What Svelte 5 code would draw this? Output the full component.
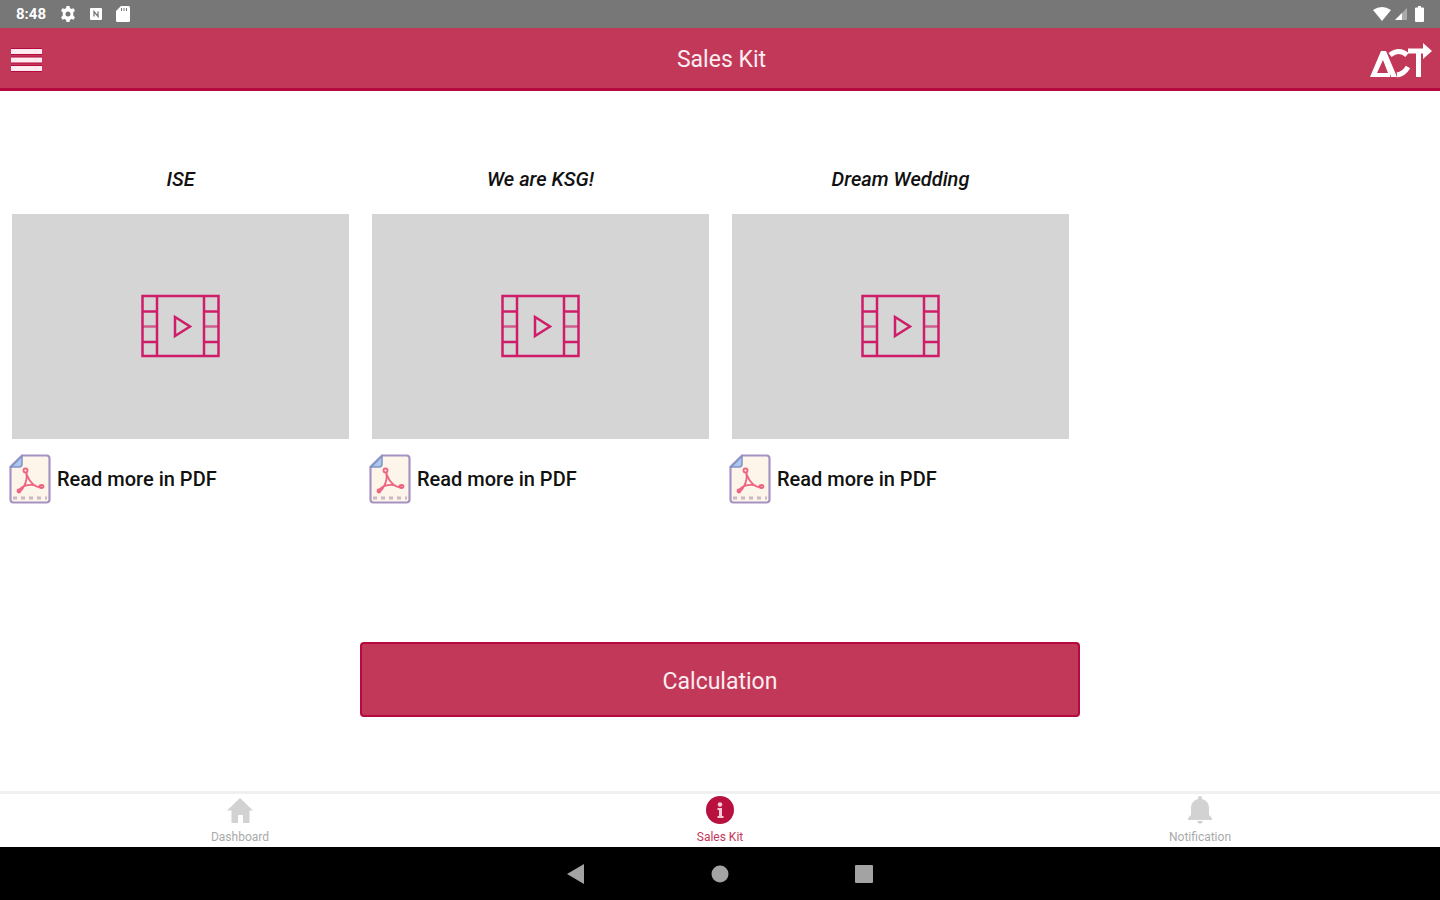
<script>
    const kits = [
        { title: 'ISE' },
        { title: 'We are KSG!' },
        { title: 'Dream Wedding' }
    ];

    let activeTab = 'Sales Kit';
    const tabs = ['Dashboard', 'Sales Kit', 'Notification'];
</script>

<div class="screen">
    <div class="status">
        <div class="status-group">
            <span class="clock">8:48</span>
            <svg width="16" height="16" viewBox="0 0 16 16">
                <path fill="#fff" fill-rule="evenodd" d="M6.5 0h3l.4 2.1 1.5.9 2.1-.8L15 4.8l-1.7 1.4v3.6L15 11.2l-1.500 2.600-2.100-.8-1.500.9L9.500 16h-3l-.4-2.100-1.500-.9-2.100.8L1 11.200l1.700-1.400V6.200L1 4.800l1.500-2.600 2.100.8 1.500-.9zM8 5.500a2.500 2.500 0 1 0 0 5 2.500 2.500 0 0 0 0-5z" />
            </svg>
            <svg width="12" height="14" viewBox="0 0 12 14">
                <rect y="1" width="12" height="12" rx="1" fill="#fff" />
                <path d="M4 9.500V4.500l4 5v-5" fill="none" stroke="#777" stroke-width="1.300" />
            </svg>
            <svg width="14" height="16" viewBox="0 0 14 16">
                <path fill="#fff" d="M5 0h7.500Q14 0 14 1.500v13q0 1.500-1.500 1.500h-11Q0 16 0 14.500V5z" />
                <path d="M5.500 2v3M8 2v3M10.500 2v3" stroke="#777" />
            </svg>
        </div>
        <div class="status-group signals">
            <svg width="18" height="14" viewBox="0 0 18 14"><path fill="#fff" d="M0 3Q9-3 18 3L9 14z" /></svg>
            <svg width="12" height="12" viewBox="0 0 12 12">
                <path fill="#aaa" d="M0 12L12 0v12z" />
                <path fill="#fff" d="M0 12L7 5v7z" />
            </svg>
            <svg width="9" height="16" viewBox="0 0 9 16"><path fill="#fff" d="M3 0h3v1.500h2q1 0 1 1V15q0 1-1 1H1q-1 0-1-1V2.500q0-1 1-1h2z" /></svg>
        </div>
    </div>

    <header>
        <button class="menu" aria-label="Menu">
            <svg width="31" height="24" viewBox="0 0 31 24">
                <path d="M0 3.500h31M0 12h31M0 20.500h31" stroke="#b5093f" stroke-width="7" />
                <path d="M0 3.500h31M0 12h31M0 20.500h31" stroke="#fde9ee" stroke-width="5" />
            </svg>
        </button>
        <h1>Sales Kit</h1>
        <svg class="logo" width="62" height="36" viewBox="0 0 62 36" role="img" aria-label="ACT">
            <path fill="#fff" fill-rule="evenodd" d="M0 35L11 9h5l11 26h-6l-1-3v3zM7 31h11l-5-13z" />
            <g fill="none" stroke="#fff">
                <path d="M20 13q9-7 17 0" stroke-width="5" />
                <path d="M27 33q7-1 11-8" stroke-width="5" />
                <path d="M38 9h17M48.500 9v26" stroke-width="5" />
            </g>
            <path fill="#fff" d="M53 1l9 8-9 8z" />
        </svg>
    </header>

    <main>
        <div class="kits">
            {#each kits as kit}
                <section class="kit">
                    <h2>{kit.title}</h2>
                    <button class="video" aria-label="Play {kit.title}">
                        <svg width="80" height="64" viewBox="0 0 80 64" fill="none" stroke="#cf1d69" stroke-width="2.500">
                            <path d="M1.500 2h76v60h-76zM16 2v60M63 2v60M1.500 17.500H16M1.500 48H16M63 17.500h14.500M63 48h14.500" />
                            <path d="M1.500 32.500H16M63 32.500h14.500" opacity=".65" />
                            <path d="M34 23v19l15-9.500z" />
                        </svg>
                    </button>
                    <a class="pdf" href="#pdf">
                        <svg width="42" height="50" viewBox="0 0 42 50">
                            <path d="M13 1.500h24.500q3 0 3 3v41q0 3-3 3h-33q-3 0-3-3V13z" fill="#fdf5ea" stroke="#a593c4" stroke-width="2.200" />
                            <path d="M2 13L13 2v8q0 3-3 3z" fill="#a9c9f0" stroke="#8192c4" stroke-width="1.500" />
                            <path d="M4 44h34" stroke="#cbb8c4" stroke-width="3" stroke-dasharray="4 4" />
                            <g fill="none" stroke="#ee6480" stroke-width="1.800">
                                <path d="M17 18q2 8 8 13 4 3 8 2M17 18q2 7-2 14-2 5-6 6M10 36q5-6 15-5" />
                                <circle cx="16.500" cy="16.500" r="2" />
                                <circle cx="10" cy="37" r="1.500" />
                                <ellipse cx="32.500" cy="32.500" rx="2" ry="1.500" />
                            </g>
                        </svg>
                        <span>Read more in PDF</span>
                    </a>
                </section>
            {/each}
        </div>

        <button class="calculation">Calculation</button>
    </main>

    <nav class="tabs">
        {#each tabs as tab}
            <button class:active={activeTab === tab} on:click={() => (activeTab = tab)}>
                <svg width="28" height="28" viewBox="0 0 28 28" fill="currentColor">
                    {#if tab === 'Dashboard'}
                        <path d="M14 2l13 12.500h-3.500V27H17v-8h-5v8H5.500V14.500H1z" />
                    {:else if tab === 'Sales Kit'}
                        <circle cx="14" cy="14" r="14" />
                        <path d="M11.500 12h4.500v8h1.500v2h-6v-2H13v-6h-1.500z" fill="#f7cbd8" />
                        <circle cx="14" cy="8.500" r="2.300" fill="#f7cbd8" />
                    {:else}
                        <path d="M14 0q2 0 2 3 7 2 7 9v7l3 3v2H2v-2l3-3v-7q0-7 7-9 0-3 2-3zM11 25h6q-1 3-3 3t-3-3z" />
                    {/if}
                </svg>
                <span>{tab}</span>
            </button>
        {/each}
    </nav>

    <div class="system">
        <button aria-label="Back"><svg width="20" height="20" viewBox="0 0 20 20"><path d="M1 10L18 0v20z" /></svg></button>
        <button aria-label="Home"><svg width="20" height="20" viewBox="0 0 20 20"><circle cx="10" cy="10" r="8.500" /></svg></button>
        <button aria-label="Overview"><svg width="20" height="20" viewBox="0 0 20 20"><rect x="1" y="1" width="18" height="18" rx="1" /></svg></button>
    </div>
</div>

<style>
    :global(body) {
        margin: 0;
        background: #fff;
    }
    .screen {
        display: flex;
        flex-direction: column;
        min-height: 100vh;
        font-family: Roboto, sans-serif;
        color: #111;
    }
    button {
        padding: 0;
        border: none;
        background: none;
        font-family: inherit;
        cursor: pointer;
    }
    svg {
        display: block;
    }
    .status {
        display: flex;
        justify-content: space-between;
        box-sizing: border-box;
        height: 28px;
        padding: 0 16px;
        background: #777;
    }
    .status-group {
        display: flex;
        align-items: center;
        gap: 14px;
    }
    .signals {
        gap: 4px;
    }
    .signals svg:last-child {
        margin-left: 4px;
    }
    .clock {
        color: #fff;
        font-size: 15px;
        font-weight: 700;
    }
    header {
        display: grid;
        grid-template-columns: 1fr auto 1fr;
        align-items: center;
        box-sizing: border-box;
        height: 63px;
        padding: 4px 8px 0 11px;
        border-bottom: 3px solid #b5093f;
        background: #c23858;
    }
    .menu {
        justify-self: start;
    }
    h1 {
        margin: 0;
        color: #fdecf0;
        font-size: 23px;
        font-weight: 400;
        line-height: 28px;
    }
    .logo {
        justify-self: end;
    }
    main {
        flex: 1;
        display: flex;
        flex-direction: column;
        justify-content: space-between;
        align-items: center;
        padding: 74px 0;
    }
    .kits {
        display: grid;
        grid-template-columns: repeat(4, 1fr);
        width: 100%;
    }
    .kit {
        padding: 0 11px 0 12px;
    }
    h2 {
        margin: 0 0 21px;
        font-size: 20px;
        font-style: italic;
        font-weight: 500;
        line-height: 28px;
        text-align: center;
    }
    .video {
        display: flex;
        align-items: center;
        justify-content: center;
        width: 100%;
        aspect-ratio: 3 / 2;
        background: #d5d5d5;
    }
    .pdf {
        display: flex;
        align-items: center;
        gap: 6px;
        margin: 15px 0 0 -3px;
        color: inherit;
        font-size: 20px;
        font-weight: 500;
        text-decoration: none;
    }
    .calculation {
        width: 50%;
        height: 75px;
        padding-top: 3px;
        border: 2px solid #b5093f;
        border-radius: 4px;
        background: #c23858;
        color: #fdecf0;
        font-size: 23px;
    }
    .tabs {
        display: grid;
        grid-template-columns: repeat(3, 1fr);
        box-sizing: border-box;
        height: 56px;
        border-top: 3px solid #f0f0f0;
    }
    .tabs button {
        display: flex;
        flex-direction: column;
        align-items: center;
        gap: 6px;
        padding-top: 2px;
        color: #d2d2d2;
    }
    .tabs span {
        color: #aaa;
        font-size: 12px;
        line-height: 14px;
    }
    .tabs .active {
        color: #b8103f;
    }
    .tabs .active span {
        color: #c23858;
    }
    .system {
        display: flex;
        justify-content: center;
        height: 53px;
        background: #000;
    }
    .system button {
        display: flex;
        align-items: center;
        justify-content: center;
        width: 10%;
    }
    .system svg {
        fill: #a3a3a3;
    }
</style>
